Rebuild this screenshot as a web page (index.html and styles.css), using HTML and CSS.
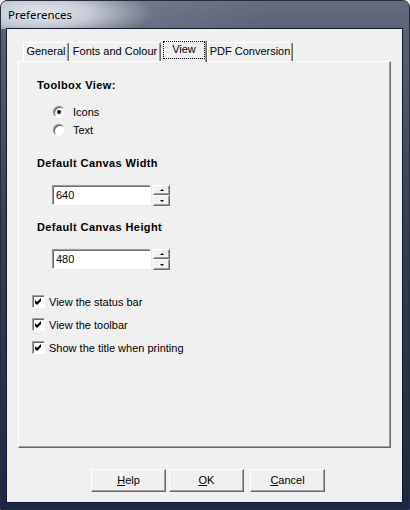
FILE: index.html
```html
<!DOCTYPE html>
<html lang="en">
<head>
  <meta charset="UTF-8">
  <title>Preferences</title>
  <link rel="stylesheet" href="styles.css">
</head>
<body>

  <div class="window">
    <div class="titlebar"><span class="title">Preferences</span></div>

    <div class="client">
      <div class="tabs">
        <div class="tab tab-general">General</div>
        <div class="tab tab-fonts">Fonts and Colour</div>
        <div class="tab tab-view active"><span class="focus">View</span></div>
        <div class="tab tab-pdf">PDF Conversion</div>
      </div>

      <div class="page">
        <div class="group-title first">Toolbox View:</div>
        <div class="radios">
          <div class="radio-row"><span class="radio checked"></span>Icons</div>
          <div class="radio-row"><span class="radio"></span>Text</div>
        </div>

        <div class="group-title after-radios">Default Canvas Width</div>
        <div class="spin">
          <div class="spin-input">640</div>
          <div class="spin-buttons">
            <div class="spin-btn"><span class="arrow up"></span></div>
            <div class="spin-btn"><span class="arrow down"></span></div>
          </div>
        </div>

        <div class="group-title">Default Canvas Height</div>
        <div class="spin">
          <div class="spin-input">480</div>
          <div class="spin-buttons">
            <div class="spin-btn"><span class="arrow up"></span></div>
            <div class="spin-btn"><span class="arrow down"></span></div>
          </div>
        </div>

        <div class="checks">
          <div class="check-row">
            <span class="checkbox"><svg width="11" height="11" viewBox="1 1 11 11"><polygon points="3,5 5,7 9,3 9,6 5,10 3,8" fill="#000"/></svg></span>
            View the status bar
          </div>
          <div class="check-row">
            <span class="checkbox"><svg width="11" height="11" viewBox="1 1 11 11"><polygon points="3,5 5,7 9,3 9,6 5,10 3,8" fill="#000"/></svg></span>
            View the toolbar
          </div>
          <div class="check-row">
            <span class="checkbox"><svg width="11" height="11" viewBox="1 1 11 11"><polygon points="3,5 5,7 9,3 9,6 5,10 3,8" fill="#000"/></svg></span>
            Show the title when printing
          </div>
        </div>
      </div>

      <div class="buttons">
        <div class="btn btn-help"><u>H</u>elp</div>
        <div class="btn btn-ok"><u>O</u>K</div>
        <div class="btn btn-cancel"><u>C</u>ancel</div>
      </div>
    </div>
  </div>

</body>
</html>
```

FILE: styles.css
```css
* {
  box-sizing: border-box;
}

body {
  margin: 0;
  background: #ffffff;
  font-family: "Liberation Sans", Arial, sans-serif;
  font-size: 11px;
  color: #000;
}

/* window frame */
.window {
  width: 410px;
  height: 510px;
  display: flex;
  flex-direction: column;
  border: 1px solid #262c3a;
  border-radius: 7px 7px 0 0;
  background: linear-gradient(180deg, #666d81 0%, #565e73 8%, #343e58 45%, #1a2848 100%);
}

.titlebar {
  height: 28px;
  padding-left: 7px;
  border-radius: 6px 6px 0 0;
  background:
    radial-gradient(ellipse 115px 30px at 38px 12px, rgba(236, 239, 245, 0.95) 0%, rgba(214, 218, 228, 0.85) 45%, rgba(110, 118, 138, 0) 100%),
    linear-gradient(90deg, rgba(0, 0, 0, 0) 0, rgba(255, 255, 255, 0.08) 150px, rgba(0, 0, 0, 0) 270px);
}

.title {
  font-family: "Noto Sans", "Open Sans", sans-serif;
  font-size: 11.5px;
  line-height: 28px;
  color: #000;
}

.client {
  flex: 1;
  margin: 0 7px 7px 6px;
  padding: 11px 11px 0 11px;
  background: #f0f0f0;
  box-shadow: 0 0 0 1px #121a2c;
}

/* tabs */
.tabs {
  display: flex;
  align-items: flex-end;
  height: 21px;
  padding-left: 5px;
  position: relative;
  z-index: 1;
}

.tab {
  height: 19px;
  line-height: 17px;
  text-align: center;
  background: #f0f0f0;
  border: 1px solid #ffffff;
  border-bottom: none;
  border-right-color: #696969;
  border-radius: 2px 2px 0 0;
  box-shadow: inset -1px 0 0 #a0a0a0;
  white-space: nowrap;
}

.tab-general { width: 46px; }
.tab-fonts { width: 92px; }
.tab-view { width: 46px; }
.tab-pdf { width: 86px; }

.tab.active {
  height: 22px;
  margin-bottom: -1px;
  padding: 0 1px;
}

.focus {
  display: block;
  height: 18px;
  line-height: 15px;
  border: 1px dotted #000;
}

.page {
  height: 387px;
  padding-left: 13px;
  background: #f0f0f0;
  border: 1px solid #ffffff;
  border-right-color: #696969;
  border-bottom-color: #696969;
  box-shadow: inset -1px -1px 0 #a0a0a0;
}

.group-title {
  margin: 15px 0 0 5px;
  font-weight: bold;
  letter-spacing: 0.4px;
  line-height: 13px;
  height: 13px;
}

.group-title.first {
  margin-top: 17px;
}

.group-title.after-radios {
  margin-top: 18px;
}

.radios {
  margin: 11px 0 0 21px;
}

.radio-row {
  display: flex;
  align-items: center;
  height: 18px;
}

.radio {
  width: 12px;
  height: 12px;
  margin-right: 8px;
  border-radius: 50%;
  background: #ffffff;
  border: 1px solid;
  border-color: #8a8a8a #ffffff #ffffff #8a8a8a;
  box-shadow: inset 1px 1px 0 #5a5a5a, 0 0 0 0.5px #d8d8d8;
  display: flex;
  align-items: center;
  justify-content: center;
}

.radio.checked::after {
  content: "";
  width: 4px;
  height: 4px;
  border-radius: 50%;
  background: #000;
}

/* spin boxes */
.spin {
  display: flex;
  align-items: flex-start;
  margin: 15px 0 0 20px;
  height: 21px;
}

.spin-input {
  width: 99px;
  height: 20px;
  padding-left: 3px;
  line-height: 19px;
  background: #ffffff;
  border: 1px solid;
  border-color: #a0a0a0 #ffffff #ffffff #a0a0a0;
  box-shadow: inset 1px 1px 0 #696969, 0 0 0 0.5px #e3e3e3;
}

.spin-buttons {
  margin-left: 2px;
  width: 17px;
  display: flex;
  flex-direction: column;
}

.spin-btn {
  height: 10px;
  background: #f0f0f0;
  border: 1px solid;
  border-color: #ffffff #696969 #696969 #ffffff;
  box-shadow: inset -1px -1px 0 #a0a0a0;
  display: flex;
  align-items: center;
  justify-content: center;
}

.spin-btn + .spin-btn {
  height: 11px;
}

.arrow {
  width: 1px;
  height: 0;
  border-left: 2px solid transparent;
  border-right: 2px solid transparent;
}

.arrow.up {
  border-bottom: 2px solid #000;
}

.arrow.down {
  border-top: 2px solid #000;
}

/* check boxes */
.checks {
  margin-top: 20px;
}

.check-row {
  display: flex;
  align-items: center;
  height: 23px;
}

.checkbox {
  width: 13px;
  height: 13px;
  margin-right: 4px;
  background: #ffffff;
  border: 1px solid;
  border-color: #a0a0a0 #ffffff #ffffff #a0a0a0;
  box-shadow: inset 1px 1px 0 #696969;
  display: flex;
  align-items: center;
  justify-content: center;
}

.checkbox svg {
  display: block;
}

/* dialog buttons */
.buttons {
  display: flex;
  margin-top: 21px;
  padding-left: 73px;
}

.btn {
  width: 75px;
  height: 23px;
  line-height: 21px;
  text-align: center;
  background: #f0f0f0;
  border: 1px solid;
  border-color: #ffffff #696969 #696969 #ffffff;
  box-shadow: inset -1px -1px 0 #a0a0a0;
}

.btn-ok { margin-left: 3px; }
.btn-cancel { margin-left: 6px; }
```
